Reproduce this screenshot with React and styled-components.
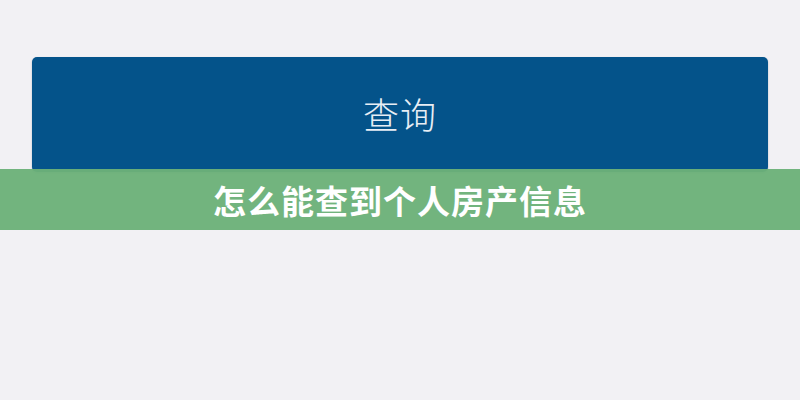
import styled, { createGlobalStyle } from 'styled-components'

const GlobalStyle = createGlobalStyle`
  html, body {
    margin: 0;
    padding: 0;
    background: #f2f1f4;
    font-family: "Noto Sans CJK SC", "Noto Sans", sans-serif;
  }
`

const Page = styled.div`
  position: relative;
  width: 800px;
  height: 400px;
  overflow: hidden;
  background: #f2f1f4;
  padding: 57px 32px 0;
  box-sizing: border-box;
`

const QueryButton = styled.button`
  display: flex;
  align-items: center;
  justify-content: center;
  width: 100%;
  height: 115px;
  padding: 0;
  background: #04538a;
  border: none;
  border-radius: 5px;
  box-shadow: 0 1px 2px rgba(0, 40, 70, 0.25);
  color: #e8eef5;
  font-family: "Noto Sans CJK SC", sans-serif;
  font-size: 36px;
  font-weight: 300;
  letter-spacing: 1px;
  line-height: 1;
`

const Label = styled.span`
  display: block;
  margin-top: -3px;
`

const Banner = styled.div`
  position: absolute;
  left: 0;
  right: 0;
  top: 169px;
  height: 61px;
  display: flex;
  align-items: center;
  justify-content: center;
  background: rgba(108, 177, 121, 0.96);
  color: #ffffff;
  font-family: "Noto Sans CJK SC", sans-serif;
  font-size: 33px;
  font-weight: 700;
  letter-spacing: 1px;
`

export default function App() {
  return (
    <>
      <GlobalStyle />
      <Page>
        <QueryButton>
          <Label>查询</Label>
        </QueryButton>
        <Banner>怎么能查到个人房产信息</Banner>
      </Page>
    </>
  )
}
